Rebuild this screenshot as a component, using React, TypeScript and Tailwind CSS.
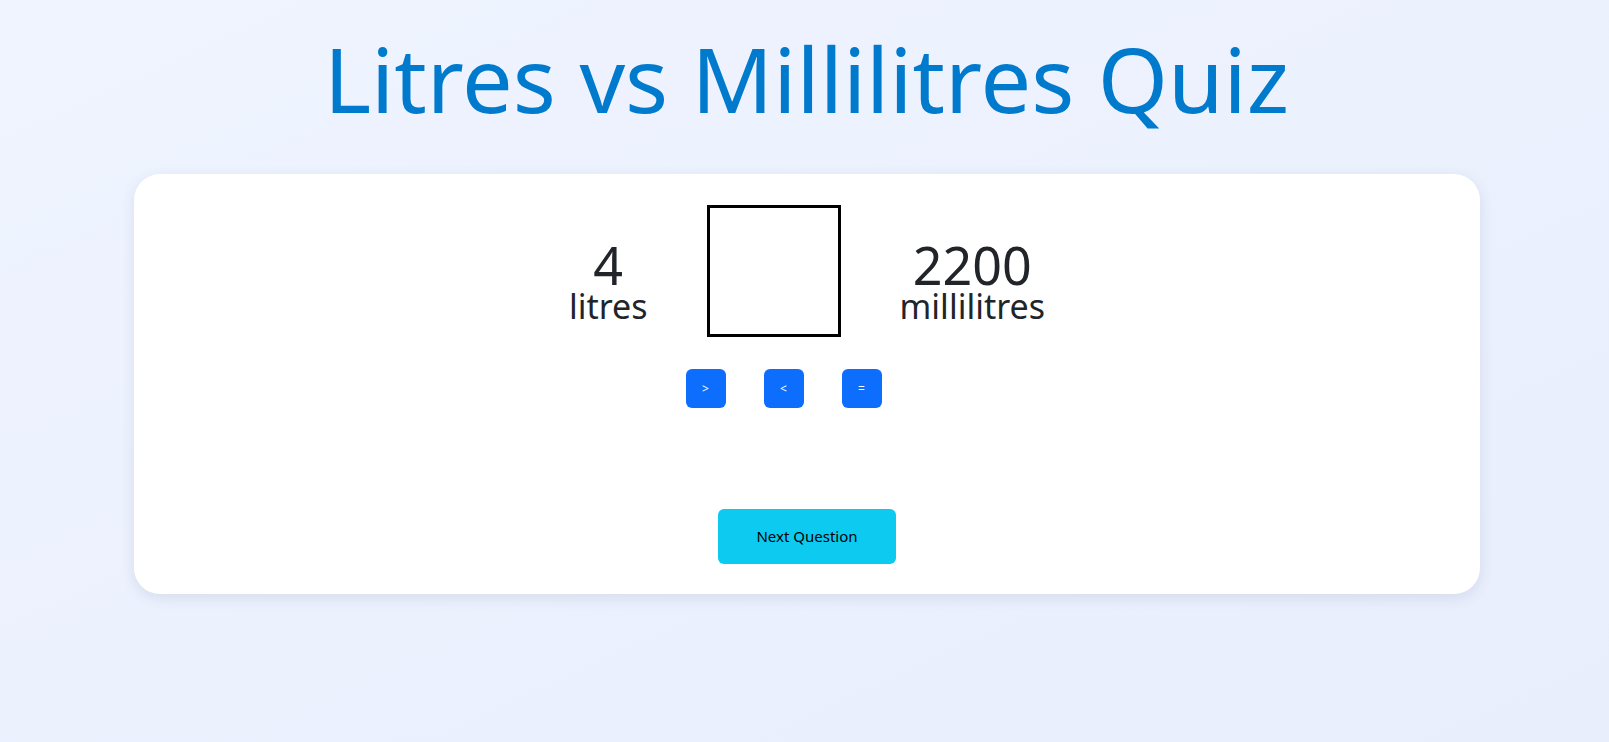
import React from "react";

export default function App() {
  return (
    <div className="min-h-screen w-full flex flex-col items-center bg-gradient-to-br from-[#eff4ff] to-[#e8eefc] font-['Noto_Sans',sans-serif]">
      <h1 className="mt-[33px] mb-[51px] text-[90px] leading-none text-[#007acc] font-normal ml-[4px]">
        Litres vs Millilitres Quiz
      </h1>
      <div className="ml-[5px] w-[1346px] h-[420px] rounded-[26px] bg-white shadow-[0_4px_14px_rgba(60,70,110,0.12)] pt-[31px] pb-[30px] flex flex-col items-center text-[#212529]">
        <div className="flex items-start justify-center gap-[59px]">
          <div className="mt-[36px] flex flex-col items-center">
            <span className="text-[52px] leading-[48px]">4</span>
            <span className="text-[34px] leading-none">litres</span>
          </div>
          <div className="w-[134px] h-[132px] border-[3px] border-black" />
          <div className="mt-[36px] flex flex-col items-center">
            <span className="text-[52px] leading-[48px]">2200</span>
            <span className="text-[34px] leading-none">millilitres</span>
          </div>
        </div>
        <div className="mt-[32px] flex items-center justify-center gap-[38px] pr-[47px]">
          {[">", "<", "="].map((s) => (
            <button
              key={s}
              className="w-[40px] h-[39px] rounded-[6px] bg-[#0d6efd] text-white text-[12px] leading-none flex items-center justify-center"
            >
              {s}
            </button>
          ))}
        </div>
        <button className="mt-[101px] w-[178px] h-[55px] rounded-[6px] bg-[#0dcaf0] text-[15px] text-black flex items-center justify-center">
          Next Question
        </button>
      </div>
    </div>
  );
}
